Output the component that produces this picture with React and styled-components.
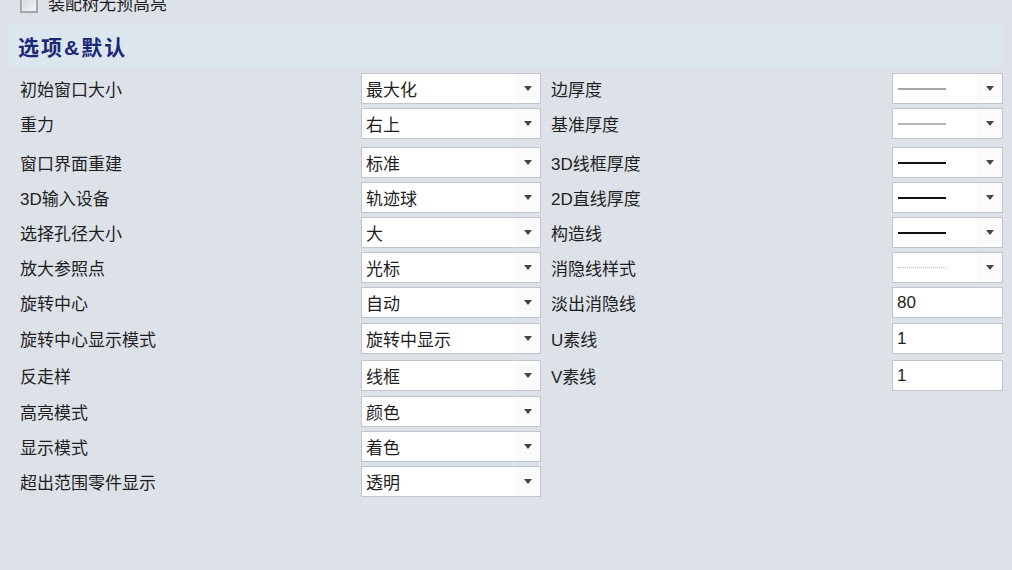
import React from "react";
import styled, { createGlobalStyle } from "styled-components";

const GlobalStyle = createGlobalStyle`
  html, body {
    margin: 0;
    padding: 0;
    background: #dde1e8;
    overflow: hidden;
  }
  body {
    font-family: "Liberation Sans", "Noto Sans CJK SC", sans-serif;
    color: #1f1f1f;
  }
`;

const Page = styled.div`
  width: 1012px;
  height: 570px;
  overflow: hidden;
  background: #dde1e8;
`;

const Panel = styled.div`
  margin-top: -14px;
  padding: 0 9px;
`;

const CheckRow = styled.div`
  display: flex;
  align-items: center;
  height: 32px;
  padding-left: 11px;
  gap: 10px;
  font-size: 17px;
`;

const CheckBox = styled.span`
  box-sizing: border-box;
  width: 18px;
  height: 18px;
  margin-top: 4px;
  border: 2px solid #a3a6ab;
  background: linear-gradient(135deg, #d3d6db, #f4f5f7);
  box-shadow: inset 0 0 0 1px #eef0f2;
`;

const Header = styled.div`
  margin-top: 5px;
  height: 44px;
  display: flex;
  align-items: center;
  padding-left: 9px;
  padding-top: 2px;
  box-sizing: border-box;
  background: #dce6ee;
  font-size: 21px;
  font-weight: 700;
  letter-spacing: 2px;
  color: #1b2878;
`;

const Rows = styled.div`
  display: flex;
  flex-direction: column;
  gap: 4px;
  margin-top: 6px;
`;

const Row = styled.div`
  display: grid;
  grid-template-columns: 352px 180px 351px 111px;
  height: 31px;
  margin-top: ${(p) => p.$extra || 0}px;
`;

const Label = styled.div`
  display: flex;
  align-items: center;
  padding-left: ${(p) => (p.$right ? 10 : 11)}px;
  font-size: 17px;
  white-space: nowrap;
`;

const Box = styled.div`
  display: flex;
  align-items: center;
  box-sizing: border-box;
  height: 31px;
  background: #ffffff;
  border: 1px solid #c2c5cb;
  font-size: 17px;
`;

const Value = styled.div`
  flex: 1;
  padding-left: 4px;
  white-space: nowrap;
  display: flex;
  align-items: center;
`;

const ArrowCell = styled.div`
  width: 25px;
  height: 100%;
  display: flex;
  align-items: center;
  justify-content: center;
  background: #fbfbfb;
`;

const Arrow = styled.span`
  width: 0;
  height: 0;
  border-left: 4px solid transparent;
  border-right: 4px solid transparent;
  border-top: 5px solid #454545;
`;

const LineSample = styled.span`
  display: block;
  width: 48px;
  margin-left: 1px;
  border-top: ${(p) => p.$line};
`;

const Select = ({ children }) => (
  <Box>
    <Value>{children}</Value>
    <ArrowCell>
      <Arrow />
    </ArrowCell>
  </Box>
);

const Input = ({ value }) => (
  <Box>
    <Value>{value}</Value>
  </Box>
);

const rows = [
  { l: "初始窗口大小", v: "最大化", r: "边厚度", line: "2px solid #a4a4a4" },
  { l: "重力", v: "右上", r: "基准厚度", line: "2px solid #b4b4b4" },
  { l: "窗口界面重建", v: "标准", r: "3D线框厚度", line: "2px solid #111", extra: 4 },
  { l: "3D输入设备", v: "轨迹球", r: "2D直线厚度", line: "2px solid #111" },
  { l: "选择孔径大小", v: "大", r: "构造线", line: "2px solid #111" },
  { l: "放大参照点", v: "光标", r: "消隐线样式", line: "1px dotted #b8b8b8" },
  { l: "旋转中心", v: "自动", r: "淡出消隐线", input: "80" },
  { l: "旋转中心显示模式", v: "旋转中显示", r: "U素线", input: "1", extra: 1 },
  { l: "反走样", v: "线框", r: "V素线", input: "1", extra: 2 },
  { l: "高亮模式", v: "颜色", extra: 1 },
  { l: "显示模式", v: "着色" },
  { l: "超出范围零件显示", v: "透明" },
];

export default function App() {
  return (
    <Page>
      <GlobalStyle />
      <Panel>
        <CheckRow>
          <CheckBox />
          <span>装配树无预高亮</span>
        </CheckRow>
        <Header>选项&amp;默认</Header>
        <Rows>
          {rows.map((row) => (
            <Row key={row.l} $extra={row.extra}>
              <Label>{row.l}</Label>
              <Select>{row.v}</Select>
              {row.r && <Label $right>{row.r}</Label>}
              {row.r &&
                (row.input ? (
                  <Input value={row.input} />
                ) : (
                  <Select>
                    <LineSample $line={row.line} />
                  </Select>
                ))}
            </Row>
          ))}
        </Rows>
      </Panel>
    </Page>
  );
}
